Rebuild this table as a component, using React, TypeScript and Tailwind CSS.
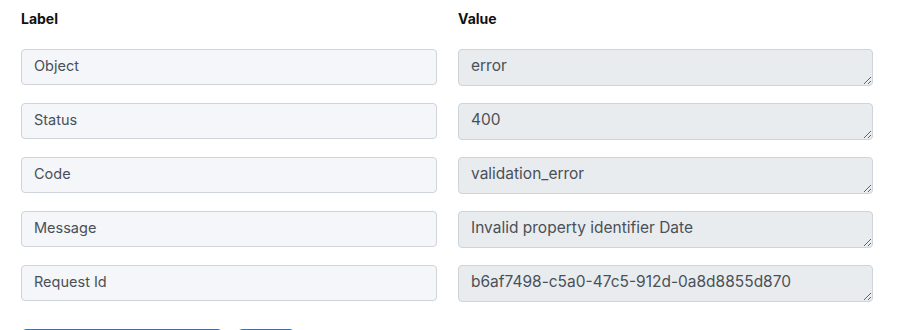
import React from 'react';

const rows: [string, string][] = [
  ['Object', 'error'],
  ['Status', '400'],
  ['Code', 'validation_error'],
  ['Message', 'Invalid property identifier Date'],
  ['Request Id', 'b6af7498-c5a0-47c5-912d-0a8d8855d870'],
];

export default function App() {
  return (
    <div className="bg-white w-[903px] h-[330px] overflow-hidden pl-[21px] pt-[10px] font-['Inter','Open_Sans',sans-serif] text-[#111]">
      <div className="grid grid-cols-[416px_415px] gap-x-[21px]">
        <div className="text-[14px] font-bold leading-[18px] pb-[21px]">Label</div>
        <div className="text-[14px] font-bold leading-[18px] pb-[21px]">Value</div>
        {rows.map(([label, value]) => (
          <React.Fragment key={label}>
            <input
              readOnly
              value={label}
              className="h-[36px] mb-[18px] rounded-[4px] border border-[#ced4da] bg-[#f4f6f9] px-[12px] pb-[3px] text-[14.5px] text-[#495057] outline-none"
            />
            <textarea
              readOnly
              rows={1}
              value={value}
              className="h-[37px] mb-[17px] rounded-[4px] border border-[#ced4da] bg-[#e9ecef] px-[12px] pt-[5px] text-[15.5px] leading-[22px] text-[#495057] outline-none"
            />
          </React.Fragment>
        ))}
      </div>
      <div className="flex gap-[16px] pl-px pt-[10px]">
        <button className="w-[200px] h-[36px] rounded-[4px] border border-[#1a73e8] bg-white" />
        <button className="w-[56px] h-[36px] rounded-[4px] border border-[#1a73e8] bg-white" />
      </div>
    </div>
  );
}
